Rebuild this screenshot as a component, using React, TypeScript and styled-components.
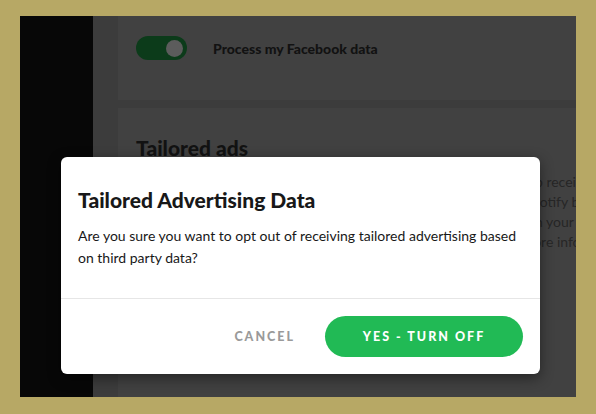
import styled, { createGlobalStyle } from 'styled-components';

const GlobalStyle = createGlobalStyle`
  body {
    margin: 0;
    background: #b7a865;
    font-family: Lato, "Noto Sans", sans-serif;
  }
`;

const Frame = styled.div`
  width: 596px;
  height: 414px;
  padding: 16px 20px 17px;
  box-sizing: border-box;
  background: #b7a865;
`;

const Screen = styled.div`
  position: relative;
  display: flex;
  width: 556px;
  height: 381px;
  overflow: hidden;
  background: #3c3c3c;
`;

const Sidebar = styled.div`
  width: 73px;
  flex-shrink: 0;
  background: #070707;
`;

const Main = styled.div`
  flex: 1;
  min-width: 0;
  display: flex;
  flex-direction: column;
  gap: 8px;
  padding-left: 25px;
`;

const Card = styled.div<{ $height?: number }>`
  background: #414141;
  padding-left: 18px;
  height: ${(p) => (p.$height ? `${p.$height}px` : 'auto')};
  flex: ${(p) => (p.$height ? 'none' : '1')};
  display: flex;
  flex-direction: column;
`;

const ToggleRow = styled.div`
  display: flex;
  align-items: center;
  gap: 26px;
  margin-top: 20px;
`;

const Toggle = styled.div`
  width: 51px;
  height: 24px;
  border-radius: 12px;
  background: #0c3b1a;
  display: flex;
  align-items: center;
  justify-content: flex-end;
  padding: 0 4px;
  box-sizing: border-box;
`;

const Knob = styled.div`
  width: 17px;
  height: 17px;
  border-radius: 50%;
  background: #5c5c5c;
`;

const RowLabel = styled.span`
  font-size: 14px;
  font-weight: 900;
  color: #121212;
`;

const SectionTitle = styled.h2`
  margin: 27px 0 11px;
  font-size: 21px;
  line-height: 26px;
  font-weight: 900;
  color: #121212;
`;

const Para = styled.div`
  font-size: 14px;
  line-height: 20px;
  color: #262626;
  white-space: nowrap;
`;

const Backdrop = styled.div`
  position: absolute;
  inset: 0;
  padding: 141px 0 0 41px;
`;

const Modal = styled.div`
  width: 479px;
  height: 217px;
  background: #fff;
  border-radius: 6px;
  box-shadow: 0 4px 14px rgba(0, 0, 0, 0.45);
  display: flex;
  flex-direction: column;
`;

const ModalBody = styled.div`
  padding: 29px 17px 29px;
  border-bottom: 1px solid #e6e6e6;
`;

const ModalTitle = styled.h1`
  margin: 0 0 11px;
  font-size: 21px;
  line-height: 28px;
  font-weight: 900;
  color: #181818;
`;

const ModalText = styled.p`
  margin: 0;
  font-size: 14px;
  line-height: 22px;
  white-space: nowrap;
  color: #181818;
`;

const Footer = styled.div`
  flex: 1;
  display: flex;
  align-items: center;
  justify-content: flex-end;
  gap: 16px;
  padding-right: 17px;
`;

const Action = styled.button<{ $primary?: boolean }>`
  font-family: inherit;
  font-size: 12.5px;
  font-weight: 900;
  letter-spacing: 2px;
  text-transform: uppercase;
  white-space: nowrap;
  border: none;
  cursor: pointer;
  border-radius: 21px;
  height: 41px;
  padding: 0 14px;
  width: ${(p) => (p.$primary ? '198px' : 'auto')};
  background: ${(p) => (p.$primary ? '#21ba55' : 'transparent')};
  color: ${(p) => (p.$primary ? '#fff' : '#9a9a9a')};
`;

const App = () => {
  return (
    <>
      <GlobalStyle />
      <Frame>
        <Screen>
          <Sidebar />
          <Main>
            <Card $height={84}>
              <ToggleRow>
                <Toggle>
                  <Knob />
                </Toggle>
                <RowLabel>Process my Facebook data</RowLabel>
              </ToggleRow>
            </Card>
            <Card>
              <SectionTitle>Tailored ads</SectionTitle>
              <Para>Turn off tailored ads to stop seeing ads based on your data, or stop receiving tailored ads</Para>
              <Para>including information that third parties and partners share with Spotify by</Para>
              <Para>You can still see ads based on your usage like the music you play in your</Para>
              <Para>Look at our Privacy Policy and the Cookie Policy, in the app for more info</Para>
            </Card>
          </Main>
          <Backdrop>
            <Modal>
              <ModalBody>
                <ModalTitle>Tailored Advertising Data</ModalTitle>
                <ModalText>
                  Are you sure you want to opt out of receiving tailored advertising based
                  <br />
                  on third party data?
                </ModalText>
              </ModalBody>
              <Footer>
                <Action>Cancel</Action>
                <Action $primary>Yes - Turn off</Action>
              </Footer>
            </Modal>
          </Backdrop>
        </Screen>
      </Frame>
    </>
  );
};

export default App;
